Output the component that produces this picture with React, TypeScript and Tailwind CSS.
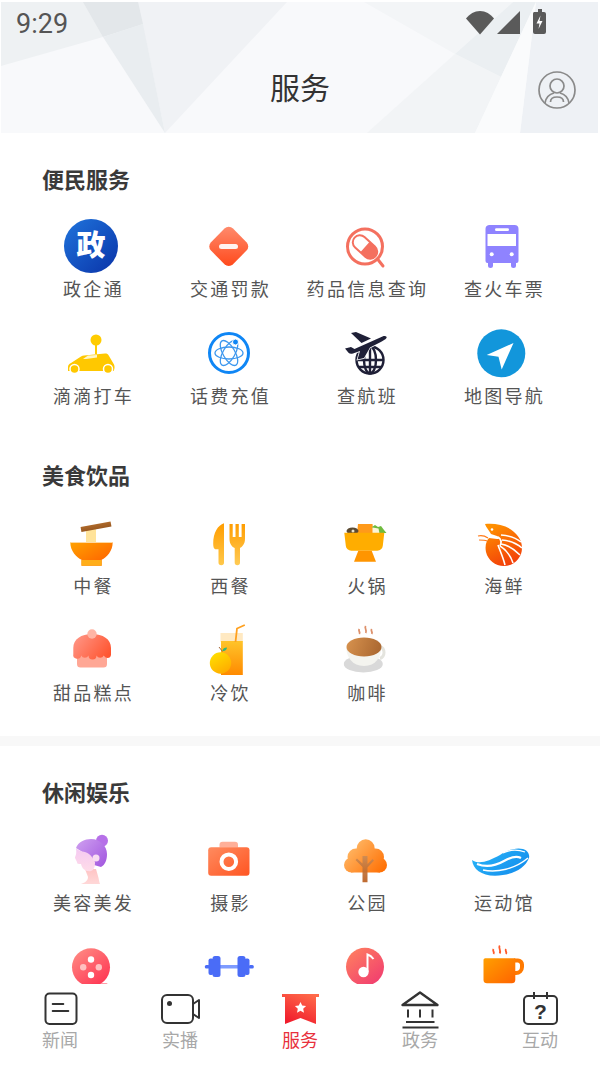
import React from "react";

const FONT = "font-['Noto_Sans_CJK_SC','Noto_Sans',sans-serif]";

type GP = { id: string; a: string; b: string; x1?: number; y1?: number; x2?: number; y2?: number };
const G = ({ id, a, b, x1 = 0, y1 = 0, x2 = 1, y2 = 1 }: GP) => (
  <linearGradient id={id} x1={x1} y1={y1} x2={x2} y2={y2}>
    <stop offset="0" stopColor={a} />
    <stop offset="1" stopColor={b} />
  </linearGradient>
);

const S = ({ children }: { children: React.ReactNode }) => (
  <svg width="60" height="60" viewBox="0 0 60 60" className="overflow-visible">
    {children}
  </svg>
);

const Zheng = () => (
  <S>
    <defs><G id="zh" a="#1f74dc" b="#0a33a8" /></defs>
    <circle cx="29" cy="30" r="27" fill="url(#zh)" />
    <text x="29" y="40" textAnchor="middle" fontSize="29" fontWeight="900" fill="#fff" fontFamily="'Noto Sans CJK SC',sans-serif">政</text>
  </S>
);
const Fine = () => (
  <S>
    <defs><G id="fi" a="#ff8a6c" b="#ff4a1c" x1={0.5} y1={0} x2={0.5} y2={1} /></defs>
    <path d="M25.500 12.500a6 6 0 0 1 8.500 0L47.500 26.200a6 6 0 0 1 0 8.400L34 48.300a6 6 0 0 1-8.500 0L12 34.600a6 6 0 0 1 0-8.400Z" fill="url(#fi)" />
    <rect x="20" y="28" width="19" height="5" rx="2.500" fill="#fff" fillOpacity="0.92" />
  </S>
);
const Pill = () => (
  <S>
    <circle cx="29" cy="30.500" r="17.500" fill="none" stroke="#f4705f" strokeWidth="3" />
    <path d="M41.500 43 47 50" stroke="#f4705f" strokeWidth="3" strokeLinecap="round" />
    <g transform="rotate(42 29 31)">
      <rect x="15" y="24" width="28" height="14" rx="7" fill="#fff" stroke="#f4705f" strokeWidth="2" />
      <path d="M29 24h7a7 7 0 0 1 0 14h-7Z" fill="#f4705f" />
    </g>
  </S>
);
const Bus = () => (
  <S>
    <path d="M16 9h25.500a4 4 0 0 1 4 4v32a2 2 0 0 1-2 2h-.5v2.500a2 2 0 0 1-5 0V47H20v2.500a2 2 0 0 1-5 0V47h-.5a2 2 0 0 1-2-2V13a4 4 0 0 1 3.500-4Z" fill="#8f83ff" />
    <rect x="14.500" y="18" width="28.500" height="12" fill="#fff" />
    <rect x="22" y="12.300" width="14" height="2.800" rx="1.400" fill="#fff" />
    <circle cx="18.700" cy="38.300" r="2" fill="#fff" />
    <circle cx="38.700" cy="38.300" r="2" fill="#fff" />
  </S>
);
const Car = () => (
  <S>
    <circle cx="34" cy="17" r="5.500" fill="#ffcc00" />
    <rect x="33" y="20" width="2" height="11" fill="#ffcc00" />
    <path d="M6 44c0-2 1-3 3-4l10-6.500c1-.6 2-.9 3-1l21-2c2 0 3 .5 4 2.500l5 8.500c.8 1.500.8 5-.5 6.500H6Z" fill="#ffc800" />
    <path d="M21 36l5-3.500 9-.5v2.500l-11 1.500Z" fill="#fff6c8" />
    <circle cx="12.500" cy="46" r="4.500" fill="#ffc800" stroke="#fff" strokeWidth="1.500" />
    <circle cx="46" cy="46" r="4.500" fill="#ffc800" stroke="#fff" strokeWidth="1.500" />
  </S>
);
const Atom = () => (
  <S>
    <circle cx="30" cy="30" r="19.500" fill="none" stroke="#0f86f5" strokeWidth="3" />
    <g fill="none" stroke="#3c97ee" strokeWidth="1.300">
      <ellipse cx="30" cy="30" rx="14" ry="6" />
      <ellipse cx="30" cy="30" rx="14" ry="6" transform="rotate(60 30 30)" />
      <ellipse cx="30" cy="30" rx="14" ry="6" transform="rotate(-60 30 30)" />
    </g>
    <circle cx="36.500" cy="19" r="3" fill="#0f86f5" stroke="#fff" strokeWidth="1" />
  </S>
);
const Plane = () => (
  <S>
    <g fill="none" stroke="#1f2037" strokeWidth="2.400">
      <circle cx="34" cy="37" r="13.500" />
      <ellipse cx="34" cy="37" rx="6" ry="13.500" />
      <path d="M34 23.500v27M20.500 37h27M22.500 44h23" />
    </g>
    <path d="M9 25.500l6-1.500 3.500 2 28-12.500c2.800-1.200 5.200.2 3.800 1.800-1 1.200-3 2.500-5.500 3.700L34 24.500l-6 10.500-6.500 1.500 2.500-8.500-7 2.500c-2 .7-3.500.3-4.500-.7Z" fill="#1f2037" stroke="#fff" strokeWidth="1.500" paintOrder="stroke" />
    <path d="M15 10l5-1 15 6.500-9.500 4.500Z" fill="#1f2037" />
  </S>
);
const Nav = () => (
  <S>
    <circle cx="28.300" cy="30.300" r="24" fill="#1296db" />
    <path d="M40.500 20 13.700 32l11.800 1.800L28.700 46.500Z" fill="#fff" />
  </S>
);
const Bowl = () => (
  <S>
    <defs>
      <G id="bo" a="#ffa200" b="#ff5a00" />
      <G id="ch" a="#b9722e" b="#8e4f1c" />
    </defs>
    <rect x="24" y="13" width="10" height="16" fill="#ffe39a" />
    <path d="M19 15.500 49 10" stroke="url(#ch)" strokeWidth="5" />
    <path d="M8.300 28.300h42.400c0 9-6 15-11 17.500v5.900H19.500v-5.900c-5-2.500-11.200-8.500-11.200-17.500Z" fill="url(#bo)" />
    <rect x="8.300" y="28" width="42.400" height="1" fill="#ffd9a0" />
    <rect x="19.500" y="46" width="20.200" height="5.700" fill="#ffae1a" />
  </S>
);
const Fork = () => (
  <S>
    <defs>
      <G id="kn" a="#ff9d00" b="#ffc84a" x1={0.5} y1={0} x2={0.5} y2={1} />
      <G id="fo" a="#ff9d00" b="#ffcb55" x1={0.5} y1={0} x2={0.5} y2={1} />
    </defs>
    <path d="M25 9.300c-6 2-10.800 9-10.800 20.500 0 3 .6 5 2 5.500h3.300v13.200a2.600 2.600 0 0 0 5.500 0Z" fill="url(#kn)" />
    <path d="M30.500 10h3.200v13h2.800V10h3.300v13h2.800V10H46v15c0 5-3 8-5 9v14.500a2.600 2.600 0 0 1-5.300 0V34c-2.500-1-5.200-4-5.200-9Z" fill="url(#fo)" />
  </S>
);
const Pot = () => (
  <S>
    <path d="M22 10h14.500l1 9.500H21Z" fill="#ff9a1a" />
    <ellipse cx="16.500" cy="17" rx="6" ry="3.500" fill="#5b4a32" />
    <circle cx="17" cy="17" r="1.500" fill="#e8e0c8" />
    <path d="M36 13l3-2 3 2 3-1 3 4 2.500 3H40Z" fill="#6fbb3f" />
    <path d="M36.500 13.500l6 1 1 5h-7Z" fill="#fbf6d8" />
    <path d="M8.300 18.700h40l-1.500 13a5.500 5.500 0 0 1-5.500 5H15.300a5.500 5.500 0 0 1-5.500-5Z" fill="#ffad00" />
    <path d="M22.300 36.700h13.400l4.300 11H18Z" fill="#ff9500" />
  </S>
);
const Shrimp = () => (
  <S>
    <defs><G id="sh" a="#ff9000" b="#f23c0a" x1={0.3} y1={0} x2={0.7} y2={1} /></defs>
    <path d="M12 10c10-1 22 1 29 8 6 5 8 11 8 16 0 10-8 18-18 18-9 0-16-6-18-14-1.500-7 1-12 3-14l8 1c3 0 3-2 0-3l-6-2c-3-5-5-7-6-10Z" fill="url(#sh)" />
    <g fill="none" stroke="#fff" strokeWidth="1.600">
      <path d="M28 21c7 .5 14 2 20 7" />
      <path d="M29 26c7 .5 14 3 20 8" />
      <path d="M28 30c7 1 13 5 19 11" />
      <path d="M27 32c5 3 10 8 13 17" />
      <path d="M25 31c2 6 5 12 7 20" />
      <path d="M25 23c3 2 4 5 2 9" />
    </g>
    <path d="M5 22c4-1 7 0 10 2M6 26c3 0 6 0 8 1" fill="none" stroke="#ff7a1a" strokeWidth="1.200" />
    <circle cx="19" cy="15.500" r="1.300" fill="#fff" />
  </S>
);
const Cake = () => (
  <S>
    <defs>
      <G id="ca" a="#ff9585" b="#ff5530" x1={0} y1={0.2} x2={1} y2={0.7} />
    </defs>
    <path d="M15 34h30v9a3.500 3.500 0 0 1-3.500 3.500h-23a3.500 3.500 0 0 1-3.500-3.500Z" fill="#ffa795" />
    <path d="M11.300 27c0-9 8-14 18.700-14s19 5 19 14v7a3.500 3.500 0 0 1-3.500 3 4 4 0 0 1-3.700-2.500 4 4 0 0 1-7.300 0 4 4 0 0 1-8 0 4 4 0 0 1-7.300 0A3.800 3.800 0 0 1 11.300 33Z" fill="url(#ca)" />
    <circle cx="30" cy="13" r="4.700" fill="#ffb5a5" />
  </S>
);
const Juice = () => (
  <S>
    <defs>
      <G id="ju" a="#ffc42a" b="#ff8a00" x1={0.5} y1={0} x2={0.5} y2={1} />
      <G id="or" a="#ffe000" b="#ffa800" x1={0.2} y1={0} x2={0.8} y2={1} />
    </defs>
    <rect x="21.500" y="12" width="22.300" height="9" fill="#ffe9c2" />
    <rect x="22" y="20" width="21.800" height="34" fill="url(#ju)" />
    <path d="M36.500 21 38 7.500 45.800 4" fill="none" stroke="#ffa01e" strokeWidth="1.800" />
    <path d="M20 26l3.500 4.500" stroke="#a5693a" strokeWidth="1" />
    <path d="M23.500 30c0-2.500 2-3.500 4.500-3.500-.3 2.500-2 4-4.500 3.500Z" fill="#34b578" />
    <circle cx="21.500" cy="42" r="10.700" fill="url(#or)" />
  </S>
);
const Coffee = () => (
  <S>
    <defs><G id="co" a="#d8934f" b="#ad6a32" x1={0} y1={0} x2={1} y2={0.2} /></defs>
    <ellipse cx="27.300" cy="43" rx="19.500" ry="8.500" fill="#d9d9d9" />
    <path d="M44 25.500a6.500 6.500 0 0 1 0 12" fill="none" stroke="#e4e4de" strokeWidth="3" />
    <path d="M10.300 26c0 10 6 19 17.700 19S45.300 36 45.300 26Z" fill="#f4f4ef" />
    <ellipse cx="28" cy="26" rx="17.500" ry="9.500" fill="url(#co)" />
    <g fill="none" stroke="#dd906a" strokeWidth="1.800">
      <path d="M23.300 8c-1.500 2 1.500 3 0 5" />
      <path d="M29.700 5c-1.800 2.500 1.800 4 0 7" />
      <path d="M35.700 8c-1.500 2 1.500 3 0 5" />
    </g>
  </S>
);
const Girl = () => (
  <S>
    <defs>
      <G id="gh" a="#cfa0f0" b="#a55ce0" x1={0} y1={0} x2={1} y2={0.8} />
      <G id="gf" a="#f4c9f2" b="#ffdce8" x1={0.5} y1={0} x2={0.5} y2={1} />
      <G id="gn" a="#ffc4c4" b="#ffd8d8" x1={0.5} y1={0} x2={0.5} y2={1} />
    </defs>
    <g transform="translate(-1 0)">
      <path d="M24 38h11l2 7c1 3 1 6 2 8H20c3-1 7-3 7-7Z" fill="url(#gn)" />
      <circle cx="41" cy="9.700" r="6" fill="#b670e8" />
      <path d="M15 17c2-6 9-9 15-9 9 0 16 7 16 15 0 6-2 11-6 13l-7-2c-3-4-2-8-10-12Z" fill="url(#gh)" />
      <path d="M15 17c3 4 9 3 13 6 3 2 4 5 6 8 0 5-1 8-4 9-5 1-9-2-10-7-3 0-4 0-4-2l-2-4c0-2 2-3 1-10Z" fill="url(#gf)" />
      <circle cx="35" cy="27" r="3.500" fill="#f9dcf2" />
    </g>
  </S>
);
const Camera = () => (
  <S>
    <defs><G id="cm" a="#ff8b5f" b="#ff5522" x1={0} y1={0} x2={1} y2={1} /></defs>
    <path d="M20.500 16.500v-2.800a3 3 0 0 1 3-3H36a3 3 0 0 1 3 3v2.800Z" fill="#ffaf98" />
    <rect x="9.200" y="16.300" width="41.300" height="28.400" rx="3" fill="url(#cm)" />
    <circle cx="29.800" cy="30.700" r="7.300" fill="none" stroke="#fff" strokeWidth="4" />
  </S>
);
const Tree = () => (
  <S>
    <defs>
      <linearGradient id="tr" gradientUnits="userSpaceOnUse" x1="12" y1="10" x2="48" y2="42">
        <stop offset="0" stopColor="#ffbe6e" />
        <stop offset="1" stopColor="#ff6d00" />
      </linearGradient>
      <G id="tt" a="#c98a55" b="#b85a1a" x1={0.5} y1={0} x2={0.5} y2={1} />
    </defs>
    <g fill="url(#tr)">
      <circle cx="29.700" cy="17.300" r="9" />
      <circle cx="20" cy="26" r="8.500" />
      <circle cx="39.500" cy="26" r="8.500" />
      <circle cx="15.500" cy="34" r="7.500" />
      <circle cx="43.500" cy="34" r="7.500" />
      <rect x="15" y="22" width="29" height="19.500" />
    </g>
    <path d="M26.500 51.300V36l-7-7 1.500-1.500 5.500 5V25h5v8l5-5 1.500 1.500-6.500 7v14.800Z" fill="url(#tt)" fillOpacity="0.9" />
  </S>
);
const Wave = () => (
  <S>
    <defs><G id="wa" a="#2ab8f8" b="#1590ee" x1={0} y1={0} x2={1} y2={0.6} /></defs>
    <path d="M-1 29C6 34 16 30 27 24 33 20 42 16 50 18 54 19 57 23 56 27 52 38 38 44.700 22 44.700 8 44.700 0 38-1 29Z" fill="url(#wa)" />
    <g fill="none" stroke="#fff">
      <path d="M4 33C14 37 24 34 31 30 38 26 44 25 48 27" strokeWidth="2.200" />
      <path d="M10 39C24 42 42 38 55 27" strokeWidth="1.500" />
      <path d="M30 22C36 19 44 18 52 21" strokeWidth="1.200" />
    </g>
  </S>
);
const Reel = () => (
  <S>
    <defs><G id="re" a="#ff8c84" b="#ff3050" x1={0.1} y1={0} x2={0.9} y2={1} /></defs>
    <circle cx="29" cy="29.300" r="19" fill="url(#re)" />
    <rect x="29" y="45.500" width="17" height="3" rx="1.500" fill="#ff3a52" />
    <circle cx="29" cy="21.500" r="3.200" fill="#fff" />
    <circle cx="29" cy="37" r="3.200" fill="#fff" />
    <circle cx="21.200" cy="29.300" r="3.200" fill="#ffc0c0" />
    <circle cx="36.800" cy="29.300" r="3.200" fill="#ffc0c0" />
  </S>
);
const Dumbbell = () => (
  <S>
    <rect x="17" y="27" width="26" height="3.500" fill="#7e9bff" />
    <rect x="5.800" y="27" width="5" height="3.500" rx="1.500" fill="#4a6cf7" />
    <rect x="49.800" y="27" width="5" height="3.500" rx="1.500" fill="#4a6cf7" />
    <rect x="9.500" y="20.500" width="5" height="16.500" rx="2" fill="#4a6cf7" />
    <rect x="13.500" y="18" width="8" height="21" rx="2.500" fill="#4a6cf7" />
    <rect x="38.500" y="18" width="8" height="21" rx="2.500" fill="#4a6cf7" />
    <rect x="45.500" y="20.500" width="5" height="16.500" rx="2" fill="#4a6cf7" />
  </S>
);
const Music = () => (
  <S>
    <defs><G id="mu" a="#ff8060" b="#f03a70" x1={0.1} y1={0} x2={0.9} y2={1} /></defs>
    <circle cx="29" cy="28.700" r="19" fill="url(#mu)" />
    <circle cx="27.500" cy="34" r="5.200" fill="#fff" />
    <path d="M31.500 34V16.500c3 1 4.500 2.500 6 4.500" fill="none" stroke="#fff" strokeWidth="2" />
  </S>
);
const Mug = () => (
  <S>
    <defs><G id="mg" a="#ff9f00" b="#ff6400" x1={0} y1={0} x2={1} y2={1} /></defs>
    <path d="M41 20.500h4a6 6 0 0 1 6 6v2.500a8 8 0 0 1-8 8H41v-4h2a4 4 0 0 0 4-4v-2.500a2.500 2.500 0 0 0-2-2H41Z" fill="#ff7a00" />
    <path d="M11.800 20.300h30.500V42a3.500 3.500 0 0 1-3.500 3.300H14a3.500 3.500 0 0 1-3.500-3.300V21.500Z" fill="url(#mg)" />
    <g fill="none" stroke="#ff5a2a" strokeWidth="1.800">
      <path d="M20.500 11c-1.500 2 1.500 3 0 5" />
      <path d="M26.700 7.500c-1.800 2.500 1.800 4.500 0 8" />
      <path d="M33 11c-1.500 2 1.500 3 0 5" />
    </g>
  </S>
);

type Item = { label?: string; icon: React.ReactNode };

const Cell = ({ label, icon, labelClass }: Item & { labelClass: string }) => (
  <div className="flex h-[86px] flex-col items-center">
    <div className="mr-[4px] h-[60px] w-[60px] shrink-0">{icon}</div>
    {label && <div className={`h-[26px] whitespace-nowrap text-[18px] tracking-[2.3px] text-[#555] ${labelClass}`}>{label}</div>}
  </div>
);

const Section = ({ title, items, gapClass, labelClass }: { title: string; items: Item[]; gapClass: string; labelClass: string }) => (
  <section className="pt-[30px]">
    <h2 className={`h-[30px] pl-[42px] text-[22px] leading-[30px] font-bold text-[#3a3a3a] ${gapClass}`}>{title}</h2>
    <div className="grid grid-cols-4 gap-y-[21px] pl-[25px] pr-[27px]">
      {items.map((i, n) => (
        <Cell key={n} {...i} labelClass={labelClass} />
      ))}
    </div>
  </section>
);

const one: Item[] = [
  { label: "政企通", icon: <Zheng /> },
  { label: "交通罚款", icon: <Fine /> },
  { label: "药品信息查询", icon: <Pill /> },
  { label: "查火车票", icon: <Bus /> },
  { label: "滴滴打车", icon: <Car /> },
  { label: "话费充值", icon: <Atom /> },
  { label: "查航班", icon: <Plane /> },
  { label: "地图导航", icon: <Nav /> },
];
const two: Item[] = [
  { label: "中餐", icon: <Bowl /> },
  { label: "西餐", icon: <Fork /> },
  { label: "火锅", icon: <Pot /> },
  { label: "海鲜", icon: <Shrimp /> },
  { label: "甜品糕点", icon: <Cake /> },
  { label: "冷饮", icon: <Juice /> },
  { label: "咖啡", icon: <Coffee /> },
];
const three: Item[] = [
  { label: "美容美发", icon: <Girl /> },
  { label: "摄影", icon: <Camera /> },
  { label: "公园", icon: <Tree /> },
  { label: "运动馆", icon: <Wave /> },
  { icon: <Reel /> },
  { icon: <Dumbbell /> },
  { icon: <Music /> },
  { icon: <Mug /> },
];

const HeaderBg = () => (
  <svg className="absolute inset-0" width="600" height="133" viewBox="0 0 600 133">
    <rect x="1" y="2" width="597" height="131" fill="#f8f9fb" />
    <polygon points="1,2 218,2 103,37 1,66" fill="#eef1f3" />
    <polygon points="138,2 287,2 165,133" fill="#f0f2f5" />
    <polygon points="83,2 138,2 143,24 103,37" fill="#e3e7ea" />
    <polygon points="103,37 143,24 165,133" fill="#e9edf0" />
    <polygon points="364,2 513,2 455,54" fill="#f3f5f7" />
    <polygon points="513,2 536,2 501,77 455,54" fill="#ebeff2" />
    <polygon points="455,54 501,77 475,133 367,133" fill="#f2f4f6" />
    <polygon points="536,2 598,2 598,133 520,133" fill="#eef1f5" />
    <polygon points="536,2 520,133 475,133" fill="#fafbfc" />
  </svg>
);

const Tab = ({ label, active, children }: { label: string; active?: boolean; children: React.ReactNode }) => (
  <div className="flex flex-col items-center">
    <svg width="40" height="40" viewBox="0 0 40 40">{children}</svg>
    <span className={`-mt-[1px] text-[18px] leading-[22px] ${active ? "text-[#e8303c]" : "text-[#a8a8a8]"}`}>{label}</span>
  </div>
);

export default function App() {
  return (
    <div className={`flex h-[1066px] w-[600px] flex-col overflow-hidden bg-white ${FONT}`}>
      <header className="relative h-[133px] shrink-0">
        <HeaderBg />
        <div className="relative flex h-[48px] items-center justify-between pl-[16px] pr-[52px]">
          <span className="mt-[1px] font-['Roboto',sans-serif] text-[27px] leading-none text-[#555]">9:29</span>
          <svg width="82" height="26" viewBox="0 0 82 26" className="mt-[-4px]">
            <path d="M0 9.500C3.500 5 8.500 2 14 2s10.500 3 14 7.500L14 25.500Z" fill="#5a5a5a" />
            <path d="M54 2v23H31Z" fill="#5a5a5a" />
            <path d="M70 3h2V0h4v3h2a2 2 0 0 1 2 2v18a2 2 0 0 1-2 2H69a2 2 0 0 1-2-2V5a2 2 0 0 1 1-2Z" fill="#5a5a5a" />
            <path d="M74.500 6.500 70.500 14.500h3l-1 5.500 4-8h-3Z" fill="#fff" />
          </svg>
        </div>
        <div className="relative grid h-[80px] grid-cols-3 items-center">
          <div />
          <h1 className="mb-[4px] text-center text-[30px] leading-none font-normal text-[#333]">服务</h1>
          <div className="flex justify-end pr-[23px]">
            <svg width="40" height="40" viewBox="0 0 40 40" className="mt-[3px]">
              <g fill="none" stroke="#8a8a8a" strokeWidth="1.700">
                <circle cx="20" cy="20" r="18" />
                <circle cx="20" cy="16" r="7" />
                <path d="M8 33c1-6 5-9 9-10M32 33c-1-6-5-9-9-10" />
                <path d="M13.500 32c0-3 2-5 6.500-5s6.500 2 6.500 5" />
              </g>
            </svg>
          </div>
        </div>
      </header>

      <main className="min-h-0 flex-1 overflow-hidden">
        <Section title="便民服务" items={one} gapClass="mb-[23px]" labelClass="leading-[25px]" />
        <div className="mt-[20px]" />
        <Section title="美食饮品" items={two} gapClass="mb-[25px]" labelClass="leading-[22px]" />
        <div className="mt-[29px] h-[10px] bg-[#f8f8f8]" />
        <Section title="休闲娱乐" items={three} gapClass="mb-[25px]" labelClass="leading-[22px]" />
      </main>

      <nav className="grid h-[82px] shrink-0 grid-cols-5 bg-white pt-[5px]">
        <Tab label="新闻">
          <rect x="5.500" y="4.500" width="31" height="30.500" rx="4" fill="none" stroke="#333" strokeWidth="2" />
          <path d="M12.700 15h10.600M12.700 22h15.600" stroke="#333" strokeWidth="2" strokeLinecap="round" />
        </Tab>
        <Tab label="实播">
          <rect x="2" y="6" width="31" height="28" rx="5" fill="none" stroke="#333" strokeWidth="2" />
          <circle cx="9.500" cy="14.500" r="2.500" fill="#333" />
          <path d="M33 15l6-4v18l-6-4" fill="none" stroke="#333" strokeWidth="2" strokeLinejoin="round" />
        </Tab>
        <Tab label="服务" active>
          <defs><G id="sv" a="#ff6a4a" b="#f01c2c" x1={0.8} y1={0} x2={0.3} y2={1} /></defs>
          <path d="M2 5h37v3h-3v27l-15.500-6L5 35V8H2Z" fill="url(#sv)" />
          <path d="M20.500 13l1.700 3.600 3.900.5-2.900 2.700.8 3.900-3.500-2-3.500 2 .8-3.900-2.900-2.700 3.900-.5Z" fill="#fff" />
        </Tab>
        <Tab label="政务">
          <path d="M2.500 16 20 3.500 37.500 16Z" fill="none" stroke="#333" strokeWidth="2.400" strokeLinejoin="round" />
          <path d="M8 20.500v8M20 20.500v8M32.500 20.500v8" stroke="#333" strokeWidth="2" />
          <path d="M6 33h28.500M2.500 38.500h36" stroke="#333" strokeWidth="2" />
        </Tab>
        <Tab label="互动">
          <rect x="4" y="7" width="33" height="28" rx="4" fill="none" stroke="#333" strokeWidth="2" />
          <path d="M14 3v7M27 3v7" stroke="#333" strokeWidth="2" />
          <text x="20.500" y="30" textAnchor="middle" fontSize="21" fontWeight="700" fill="#333" fontFamily="'Liberation Sans',sans-serif">?</text>
        </Tab>
      </nav>
    </div>
  );
}
